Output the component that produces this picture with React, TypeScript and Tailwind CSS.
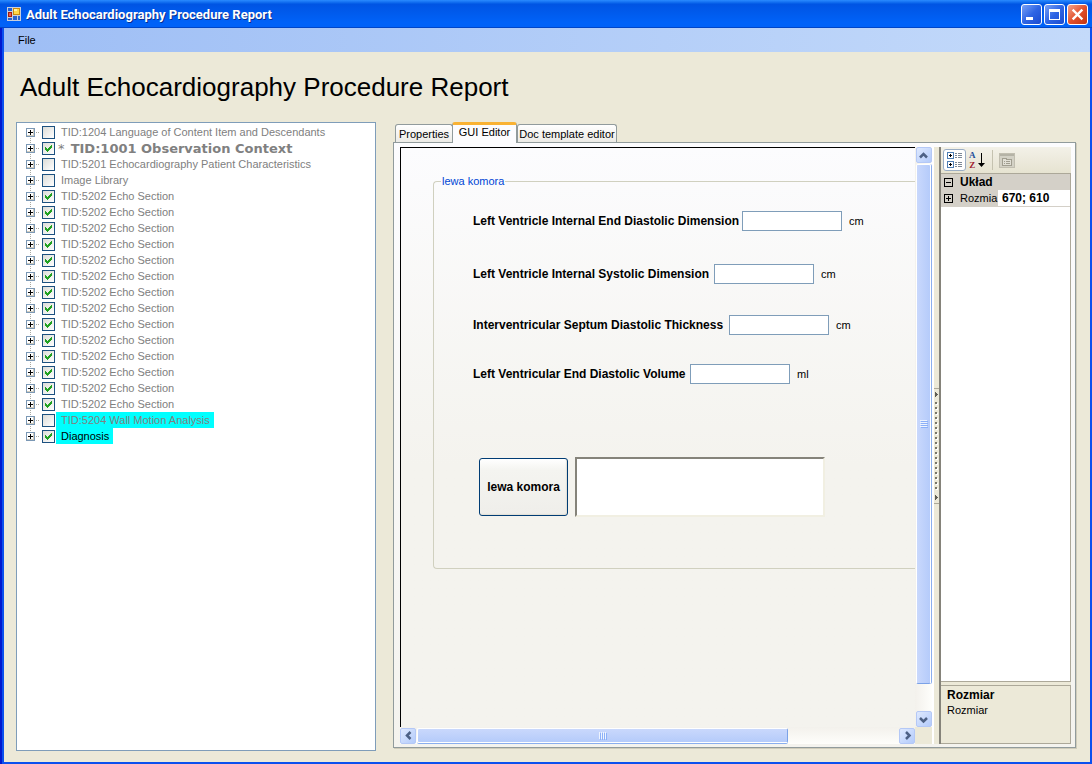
import React from 'react';

const FONT = "font-['Liberation_Sans',Arial,sans-serif]";

interface TreeItem {
  label: string;
  checked: boolean;
  strong?: boolean;
  className?: string;
}

const echoSections: TreeItem[] = Array.from({ length: 14 }, () => ({
  label: 'TID:5202 Echo Section',
  checked: true,
}));

const treeItems: TreeItem[] = [
  { label: 'TID:1204 Language of Content Item and Descendants', checked: false },
  { label: 'TID:1001 Observation Context', checked: true, strong: true },
  { label: 'TID:5201 Echocardiography Patient Characteristics', checked: false },
  { label: 'Image Library', checked: false },
  ...echoSections,
  { label: 'TID:5204 Wall Motion Analysis', checked: false, className: 'bg-[#00ffff]' },
  { label: 'Diagnosis', checked: true, className: 'bg-[#00ffff] text-black' },
];

const measurements = [
  { id: 'lvedd', label: 'Left Ventricle Internal End Diastolic Dimension', unit: 'cm', width: 'w-[269px]', gap: 'mb-[33px]' },
  { id: 'lvesd', label: 'Left Ventricle Internal Systolic Dimension', unit: 'cm', width: 'w-[241px]', gap: 'mb-[31px]' },
  { id: 'ivs', label: 'Interventricular Septum Diastolic Thickness', unit: 'cm', width: 'w-[256px]', gap: 'mb-[29px]' },
  { id: 'lvedv', label: 'Left Ventricular End Diastolic Volume', unit: 'ml', width: 'w-[217px]', gap: 'mb-0' },
];

const AppIcon = () => (
  <svg width="14" height="14" viewBox="0 0 14 14" shapeRendering="crispEdges" aria-hidden="true">
    <rect width="14" height="14" fill="#c8cfdc" />
    <rect x="1" y="1" width="4" height="3" fill="#1f5fd8" />
    <rect x="6" y="1" width="7" height="7" fill="#c98a10" />
    <rect x="7" y="2" width="5" height="5" fill="#ffd84a" />
    <rect x="7" y="2" width="3" height="2" fill="#fff3a8" />
    <rect x="1" y="5" width="4" height="5" fill="#a31d12" />
    <rect x="2" y="6" width="2" height="3" fill="#ee5a45" />
    <rect x="1" y="11" width="4" height="2" fill="#2a62cf" />
    <rect x="6" y="9" width="4" height="4" fill="#2a62cf" />
    <rect x="11" y="9" width="2" height="4" fill="#2a62cf" />
  </svg>
);

interface CaptionButtonProps {
  label: string;
  className?: string;
  children: React.ReactNode;
}

const CaptionButton = ({ label, className = 'from-[#7aa0f5] via-[#2f65e4] to-[#1a4ad0]', children }: CaptionButtonProps) => (
  <button
    type="button"
    aria-label={label}
    className={`flex h-[21px] w-[21px] items-center justify-center rounded-[3px] border border-white bg-linear-to-br ${className}`}
  >
    <svg width="19" height="19" viewBox="0 0 19 19" aria-hidden="true">
      {children}
    </svg>
  </button>
);

const TitleBar = () => (
  <header className="flex h-7 shrink-0 items-center bg-linear-to-b from-[#2a8bff] from-0% via-[#0054e3] via-15% to-[#0062f8] to-80% pr-1 pl-[7px] shadow-[inset_0_-1px_0_#0046c8]">
    <AppIcon />
    <h1 className="ml-[5px] flex-1 pt-[2px] font-['Roboto','Noto_Sans',sans-serif] text-[13px] font-bold whitespace-nowrap text-white [text-shadow:1px_1px_0_#0a2f8f]">
      Adult Echocardiography Procedure Report
    </h1>
    <div className="flex gap-[2px] pt-px">
      <CaptionButton label="Minimize">
        <rect x="4" y="12" width="7" height="3" fill="#fff" />
      </CaptionButton>
      <CaptionButton label="Maximize">
        <path d="M4 4h11v11H4z M5 7v7h9V7z" fill="#fff" fillRule="evenodd" />
      </CaptionButton>
      <CaptionButton label="Close" className="from-[#f0a188] via-[#e2512c] to-[#c1330f]">
        <path d="M5.500 5.500l8 8M13.500 5.500l-8 8" stroke="#fff" strokeWidth="2.4" strokeLinecap="square" />
      </CaptionButton>
    </div>
  </header>
);

// Plus box with the dotted guide lines of the tree
const Expander = ({ first, last }: { first: boolean; last: boolean }) => (
  <svg width="18" height="16" viewBox="0 0 18 16" shapeRendering="crispEdges" aria-hidden="true">
    {!first && <path d="M6.5 0v4" stroke="#a8a8a0" strokeDasharray="1 1" />}
    {!last && <path d="M6.5 14v2" stroke="#a8a8a0" strokeDasharray="1 1" />}
    <path d="M12 8.5h4" stroke="#a8a8a0" strokeDasharray="1 1" />
    <rect x="2.5" y="4.5" width="8" height="8" fill="#fff" stroke="#7b98b5" />
    <path d="M9 5h1v7H3v-1h6z" fill="#d0cabb" />
    <path d="M4 8.5h5M6.5 6v5" stroke="#000" />
  </svg>
);

const CheckMark = () => (
  <svg
    width="13"
    height="13"
    viewBox="0 0 13 13"
    shapeRendering="crispEdges"
    className="pointer-events-none invisible absolute inset-0 peer-checked:visible"
    aria-hidden="true"
  >
    <path d="M3 5h1v1h1v1h1v-1h1v-1h1v-1h1v-1h1v3h-1v1h-1v1h-1v1h-1v1h-1v-1h-1v-1h-1z" fill="#21a121" />
  </svg>
);

const TreeRow = ({ item, index, last }: { item: TreeItem; index: number; last: boolean }) => (
  <li className="flex h-4 items-center">
    <button type="button" aria-label={`Expand ${item.label}`} className="shrink-0">
      <Expander first={index === 0} last={last} />
    </button>
    <span className="relative mr-px block h-[13px] w-[13px] shrink-0">
      <input
        id={`node-${index}`}
        type="checkbox"
        defaultChecked={item.checked}
        className="peer block h-[13px] w-[13px] appearance-none border border-[#1c5180] bg-linear-to-br from-[#dcdcd7] to-white"
      />
      <CheckMark />
    </span>
    <label
      htmlFor={`node-${index}`}
      className={`h-4 pr-1 whitespace-nowrap ${item.className ?? ''} ${
        item.strong
          ? "pl-[2px] font-['DejaVu_Sans',Verdana,sans-serif] text-[13px] leading-[18px] font-bold"
          : 'pl-[5px] text-[11px] leading-4'
      }`}
    >
      {item.strong && <span className="mr-[2px] font-normal">* </span>}
      {item.label}
    </label>
  </li>
);

const arrows = {
  up: 'M4 9.500l3.500-3.500 3.500 3.500',
  down: 'M4 6l3.500 3.500L11 6',
  left: 'M9.500 4L6 7.500 9.500 11',
  right: 'M6 4l3.500 3.500L6 11',
};

const ScrollButton = ({ direction }: { direction: keyof typeof arrows }) => (
  <button
    type="button"
    aria-label={`Scroll ${direction}`}
    className="flex h-4 w-4 shrink-0 items-center justify-center rounded-[2px] border border-[#b4c8f6] bg-linear-to-br from-[#dfe9fe] to-[#b3cbfb]"
  >
    <svg width="15" height="15" viewBox="0 0 15 15" className="shrink-0" aria-hidden="true">
      <path d={arrows[direction]} fill="none" stroke="#4d6185" strokeWidth="2.500" />
    </svg>
  </button>
);

const VerticalScrollbar = () => (
  <div className="flex w-[17px] flex-col items-center bg-linear-to-r from-[#f3f1ec] to-[#fefefb]">
    <ScrollButton direction="up" />
    <div className="mt-px flex w-[15px] flex-[19] items-center justify-center rounded-[2px] border border-white border-b-[#7ba2e7] bg-linear-to-r from-[#c9d8fc] to-[#b5cbfa] shadow-[1px_0_0_#8aaeee]">
      <svg width="8" height="8" viewBox="0 0 8 8" shapeRendering="crispEdges" aria-hidden="true">
        <path d="M0 .5h7M0 2.500h7M0 4.500h7M0 6.500h7" stroke="#eef4fe" />
        <path d="M1 1.500h7M1 3.500h7M1 5.500h7M1 7.500h7" stroke="#8cb0f8" />
      </svg>
    </div>
    <div className="flex-1" />
    <ScrollButton direction="down" />
  </div>
);

const HorizontalScrollbar = () => (
  <div className="flex h-[17px] items-center bg-linear-to-b from-[#f3f1ec] to-[#fefefb]">
    <ScrollButton direction="left" />
    <div className="ml-px flex h-[15px] flex-[10] items-center justify-center rounded-[2px] border border-white border-r-[#7ba2e7] bg-linear-to-b from-[#c9d8fc] to-[#b5cbfa] shadow-[0_1px_0_#8aaeee]">
      <svg width="8" height="8" viewBox="0 0 8 8" shapeRendering="crispEdges" aria-hidden="true">
        <path d="M.5 0v7M2.500 0v7M4.500 0v7M6.500 0v7" stroke="#eef4fe" />
        <path d="M1.500 1v7M3.500 1v7M5.500 1v7M7.500 1v7" stroke="#8cb0f8" />
      </svg>
    </div>
    <div className="flex-[3]" />
    <ScrollButton direction="right" />
  </div>
);

const DesignSurface = () => (
  <div className="min-h-0 flex-1 overflow-hidden border-t border-l border-black bg-linear-to-b from-[#fcfcfe] to-[#f4f3ee] to-55% pt-[25px] pl-8">
    <fieldset className="h-[396px] rounded-l-[4px] border border-r-0 border-[#d0d0bf]">
      <legend className="ml-[7px] px-px text-[11px] leading-4 text-[#0046d5]">lewa komora</legend>
      <div className="pt-[22px] pl-[39px]">
        {measurements.map(m => (
          <div key={m.id} className={`flex h-5 items-center ${m.gap}`}>
            <label htmlFor={m.id} className={`shrink-0 text-xs font-bold whitespace-nowrap ${m.width}`}>
              {m.label}
            </label>
            <input id={m.id} type="text" className="h-5 w-[100px] border border-[#7f9db9] bg-white px-1 text-[11px] outline-none" />
            <span className="ml-[7px] text-[11px]">{m.unit}</span>
          </div>
        ))}
        <div className="mt-[73px] ml-[6px] flex items-center">
          <button
            type="button"
            className="h-[58px] w-[89px] shrink-0 rounded-[3px] border border-[#003c74] bg-linear-to-b from-white via-[#f4f4f0] via-20% to-[#efeeea] text-xs font-bold whitespace-nowrap shadow-[inset_-1px_-1px_1px_#e2dfd6]"
          >
            lewa komora
          </button>
          <textarea
            aria-label="lewa komora"
            className="ml-[7px] h-[60px] w-[250px] shrink-0 resize-none border-2 border-t-[#85837a] border-r-[#f1efe2] border-b-[#f1efe2] border-l-[#85837a] bg-white px-1 text-[11px] outline-none"
          />
        </div>
      </div>
    </fieldset>
  </div>
);

const Splitter = () => (
  <div className="flex w-[7px] shrink-0 flex-col items-center justify-center border-l-2 border-white bg-[#ece9d8]">
    <svg width="5" height="116" viewBox="0 0 5 116" shapeRendering="crispEdges" aria-hidden="true">
      <path d="M0 .5h5M0 115.500h5" stroke="#aca899" />
      <path d="M1 4v5l3-2.500zM1 107v5l3-2.500z" fill="#5f5d54" />
      <path d="M3 15v88" stroke="#fff" strokeWidth="2" strokeDasharray="2 3" />
      <path d="M2 14v88" stroke="#77756a" strokeWidth="2" strokeDasharray="2 3" />
    </svg>
  </div>
);

const CategorizedIcon = () => (
  <svg width="18" height="16" viewBox="0 0 18 16" shapeRendering="crispEdges" aria-hidden="true">
    <rect x="1.500" y=".5" width="6" height="6" rx="1" fill="#fff" stroke="#4f7fb5" />
    <rect x="1.500" y="9.500" width="6" height="6" rx="1" fill="#fff" stroke="#4f7fb5" />
    <path d="M3 3.500h3M4.500 2v3M3 12.500h3M4.500 11v3" stroke="#000" />
    <path
      d="M9 1.500h2M12 1.500h4M9 3.500h2M12 3.500h4M9 5.500h2M12 5.500h4M9 10.500h2M12 10.500h4M9 12.500h2M12 12.500h4M9 14.500h2M12 14.500h4"
      stroke="#7c8896"
    />
  </svg>
);

const SortIcon = () => (
  <span className="flex items-center">
    <span className="flex flex-col font-['Liberation_Serif',serif] text-[9px] leading-[10px] font-bold">
      <span className="text-[#1c4f9c]">A</span>
      <span className="text-[#a02030]">Z</span>
    </span>
    <svg width="7" height="16" viewBox="0 0 7 16" className="ml-[2px]" aria-hidden="true">
      <path d="M3 1h1v10h3L3.500 15 0 11h3z" fill="#000" />
    </svg>
  </span>
);

const PagesIcon = () => (
  <svg width="16" height="15" viewBox="0 0 16 15" shapeRendering="crispEdges" aria-hidden="true">
    <rect x=".5" y=".5" width="15" height="14" fill="#d3d1c5" stroke="#c1beb0" />
    <path d="M1 2h14" stroke="#b5b3a6" strokeWidth="2" />
    <path d="M3.500 6.500v-1h4v1h5v6h-9z" fill="#e2e0d6" stroke="#a19e90" />
    <path d="M5 8.500h1M7 8.500h4M5 10.500h1M7 10.500h4" stroke="#a19e90" />
  </svg>
);

const ToggleBox = ({ plus = false }: { plus?: boolean }) => (
  <svg width="9" height="9" viewBox="0 0 9 9" shapeRendering="crispEdges" aria-hidden="true">
    <rect x=".5" y=".5" width="8" height="8" fill="none" stroke="#000" />
    <path d={plus ? 'M2 4.500h5M4.500 2v5' : 'M2 4.500h5'} stroke="#000" />
  </svg>
);

const PropertyGrid = () => (
  <aside className="flex w-[132px] shrink-0 flex-col border-l-2 border-[#85837a] bg-[#ece9d8]">
    <div className="flex h-[26px] shrink-0 items-center bg-linear-to-b from-[#f3f1e8] to-[#e6e3d1] pl-[2px]">
      <button
        type="button"
        aria-label="Categorized"
        className="flex h-[22px] w-[23px] items-center justify-center rounded-[3px] border border-[#9aadc4] bg-white"
      >
        <CategorizedIcon />
      </button>
      <button type="button" aria-label="Alphabetical" className="ml-[3px]">
        <SortIcon />
      </button>
      <span className="ml-[7px] h-5 w-px bg-[#c5c2b0]" />
      <button type="button" aria-label="Property Pages" disabled className="ml-[6px]">
        <PagesIcon />
      </button>
    </div>
    <div className="min-h-0 flex-1 border-t border-r border-b border-[#aca899] bg-white">
      <table className="w-full table-fixed border-collapse text-left">
        <colgroup>
          <col className="w-4" />
          <col className="w-[41px]" />
          <col />
        </colgroup>
        <tbody>
          <tr className="h-4 bg-[#d4d0c8]">
            <td className="p-0 pl-[3px]">
              <ToggleBox />
            </td>
            <th colSpan={2} className="p-0 pl-[3px] text-xs leading-4 font-bold">
              Układ
            </th>
          </tr>
          <tr className="h-4">
            <td className="bg-[#d4d0c8] p-0 pl-[3px]">
              <ToggleBox plus />
            </td>
            <th className="bg-[#d4d0c8] p-0 pl-[3px] text-[11px] leading-4 font-normal">Rozmia</th>
            <td className="border-b border-[#d4d0c8] p-0 pl-1 text-xs leading-4 font-bold">670; 610</td>
          </tr>
        </tbody>
      </table>
    </div>
    <div className="mt-[3px] h-[59px] shrink-0 border border-l-0 border-[#aca899] pt-px pl-[6px]">
      <p className="text-xs leading-4 font-bold">Rozmiar</p>
      <p className="text-[11px] leading-[14px]">Rozmiar</p>
    </div>
  </aside>
);

const tabClass =
  'h-[18px] rounded-t-[3px] border border-b-0 border-[#919b9c] bg-linear-to-b from-white to-[#ecebe6] text-[11px] leading-4 whitespace-nowrap';

const Editor = () => (
  <section className="flex min-w-0 flex-1 flex-col">
    <div role="tablist" className="relative z-10 -mb-px flex items-end pl-[2px]">
      <button type="button" role="tab" className={`mb-px w-[58px] ${tabClass}`}>
        Properties
      </button>
      <button
        type="button"
        role="tab"
        aria-selected="true"
        className="-ml-px h-[21px] w-[65px] rounded-t-[3px] border border-t-[3px] border-b-0 border-[#919b9c] border-t-[#f9b233] bg-[#fcfcfe] pb-1 text-[11px] leading-[14px] whitespace-nowrap"
      >
        GUI Editor
      </button>
      <button type="button" role="tab" className={`mb-px w-[100px] ${tabClass}`}>
        Doc template editor
      </button>
    </div>
    <div className="flex min-h-0 flex-1 border border-[#919b9c] bg-linear-to-b from-[#fcfcfe] to-[#f4f3ee] pt-1 pr-1 pb-[3px] pl-[6px] shadow-[1px_1px_0_#d0ccba]">
      <div className="flex min-w-0 flex-1 flex-col">
        <DesignSurface />
        <HorizontalScrollbar />
      </div>
      <div className="flex flex-col bg-[#ece9d8] pb-[17px]">
        <div className="flex flex-1">
          <VerticalScrollbar />
        </div>
      </div>
      <Splitter />
      <PropertyGrid />
    </div>
  </section>
);

export default function App() {
  return (
    <div className={`flex h-screen min-h-[640px] flex-col bg-[#0046e0] text-black ${FONT}`}>
      <TitleBar />
      <div className="flex min-h-0 flex-1 border-l-2 border-[#0019cf]">
        <div className="flex min-w-0 flex-1 flex-col border-r-2 border-b-2 border-l-2 border-[#0b50ee] bg-[#ece9d8]">
          <nav className="flex h-6 shrink-0 items-center bg-linear-to-r from-[#9ebef5] to-[#c4dafa] pl-2">
            <button type="button" className="px-[6px] text-[11px]">
              File
            </button>
          </nav>
          <main className="flex min-h-0 flex-1 flex-col pr-[14px] pl-3">
            <h2 className="flex h-[70px] shrink-0 items-center pl-1 text-[26px] whitespace-nowrap">
              Adult Echocardiography Procedure Report
            </h2>
            <div className="flex min-h-0 flex-1 gap-[17px]">
              <ul className="mb-[11px] w-[360px] shrink-0 overflow-hidden border border-[#7f9db9] bg-white pt-px pl-[7px] text-[#808080]">
                {treeItems.map((item, i) => (
                  <TreeRow key={i} item={item} index={i} last={i === treeItems.length - 1} />
                ))}
              </ul>
              <div className="mb-[14px] flex min-w-0 flex-1">
                <Editor />
              </div>
            </div>
          </main>
        </div>
      </div>
    </div>
  );
}
